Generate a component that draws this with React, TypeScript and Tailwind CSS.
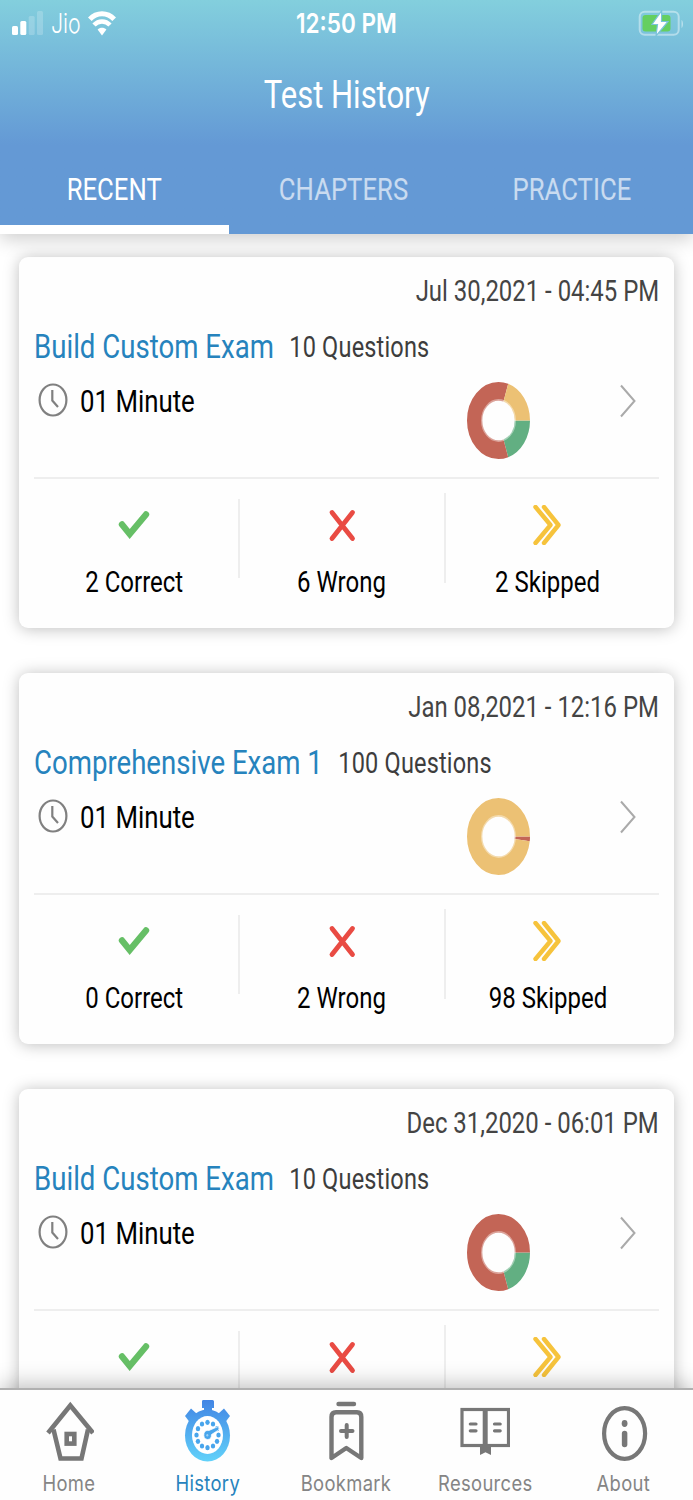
import React from 'react'
import { clsx } from 'clsx'

type Exam = {
  date: string
  title: string
  questions: number
  correct: number
  wrong: number
  skipped: number
}

const exams: Exam[] = [
  { date: 'Jul 30,2021 - 04:45 PM', title: 'Build Custom Exam', questions: 10, correct: 2, wrong: 6, skipped: 2 },
  { date: 'Jan 08,2021 - 12:16 PM', title: 'Comprehensive Exam 1', questions: 100, correct: 0, wrong: 2, skipped: 98 },
  { date: 'Dec 31,2020 - 06:01 PM', title: 'Build Custom Exam', questions: 10, correct: 2, wrong: 8, skipped: 0 },
]

const tabs = ['RECENT', 'CHAPTERS', 'PRACTICE']

const StatusBar: React.FC = () => (
  <div className="grid h-[46px] grid-cols-3 items-center pl-3 pr-[9px] font-['Inter',sans-serif] text-[27px] leading-none text-white">
    <div className="flex items-center">
      <svg className="h-6 w-[31px]" viewBox="0 0 31 24" fill="#fff">
        <rect x="0" y="15" width="6" height="9" rx="1.5" />
        <rect x="8.3" y="10" width="6" height="14" rx="1.5" />
        <rect x="16.7" y="5" width="6" height="19" rx="1.5" opacity=".2" />
        <rect x="25" y="0" width="6" height="24" rx="1.5" opacity=".2" />
      </svg>
      <span className="ml-2 w-[30px] origin-left scale-x-[.79] font-light">Jio</span>
      <svg className="ml-[7px] h-[25px] w-7" viewBox="0 0 28 25">
        <path d="M1.8 8.2C8.5 0.8 19.5 0.8 26.2 8.2" fill="none" stroke="#fff" strokeWidth="5" />
        <path d="M6 14.1C10.5 9.2 17.5 9.2 22 14.1" fill="none" stroke="#fff" strokeWidth="4.4" />
        <path d="M9.6 18.6C12 16 16 16 18.4 18.6L14 24.6Z" fill="#fff" />
      </svg>
    </div>
    <div className="flex justify-center whitespace-nowrap pr-[3px]">
      <span className="scale-x-[.835] font-semibold">12:50 PM</span>
    </div>
    <svg className="h-[27px] w-[46px] justify-self-end" viewBox="0 0 46 27">
      <rect x="1.7" y="1.8" width="39" height="23" rx="5" fill="none" stroke="#fff" strokeOpacity=".42" strokeWidth="2" />
      <path d="M43.5 10v8c2-1 2-7 0-8Z" fill="#fff" opacity=".45" />
      <rect x="4.5" y="5" width="28" height="16.500" rx="3" fill="#65cf60" />
      <path d="M23.700 .7L14 14.500h5.500L18 26L30 11.500h-6.500Z" fill="#fff" stroke="#7ac3d9" strokeWidth="1.200" />
    </svg>
  </div>
)

const Header: React.FC = () => (
  <header className="relative z-10 flex h-[234px] shrink-0 flex-col bg-linear-to-b from-[#83cfdd] to-[#6499d5] to-62% text-white shadow-[0_5px_18px_rgba(0,0,0,0.2)]">
    <StatusBar />
    <h1 className="flex h-[98px] items-center justify-center text-[38px] font-normal">
      <span className="scale-x-[.815]">Test History</span>
    </h1>
    <nav className="grid flex-1 grid-cols-[229px_228px_229px]">
      {tabs.map((tab, i) => (
        <button
          key={tab}
          className={clsx(
            'flex items-center justify-center border-b-[9px] pt-2 text-[32px]',
            i === 0 ? 'border-white text-white' : 'border-transparent text-white/65',
          )}
        >
          <span className="scale-x-[.803]">{tab}</span>
        </button>
      ))}
    </nav>
  </header>
)

const Donut: React.FC<{ exam: Exam }> = ({ exam }) => {
  const slices = [
    { value: exam.correct, color: '#62af82' },
    { value: exam.wrong, color: '#c36556' },
    { value: exam.skipped, color: '#ecc174' },
  ]
  let start = 0
  return (
    <svg className="h-[77px] w-[63px]" viewBox="0 0 76 76" preserveAspectRatio="none">
      {slices.map(({ value, color }) => {
        const share = (value / exam.questions) * 100
        const offset = -start
        start += share
        return share > 0 ? (
          <circle
            key={color}
            cx="38"
            cy="38"
            r="28.800"
            fill="none"
            stroke={color}
            strokeWidth="18.400"
            pathLength={100}
            strokeDasharray={`${share} ${100 - share}`}
            strokeDashoffset={offset}
          />
        ) : null
      })}
      <circle cx="38" cy="38" r="20.200" fill="none" stroke="#fff" strokeOpacity=".4" strokeWidth="1.800" />
    </svg>
  )
}

const CheckIcon = () => (
  <svg className="h-10 w-10" viewBox="0 0 40 40">
    <path d="M8 19.500L15.700 29L32 9.500" fill="none" stroke="#66bf66" strokeWidth="6.400" strokeLinecap="round" />
  </svg>
)

const CrossIcon = () => (
  <svg className="h-10 w-10" viewBox="0 0 40 40">
    <path d="M10 7.500L30.500 33.500M30.500 7.500L10 33.500" fill="none" stroke="#e94b43" strokeWidth="4.800" strokeLinecap="round" />
  </svg>
)

const SkipIcon = () => (
  <svg className="h-10 w-10" viewBox="0 0 40 40">
    <path d="M7.500 2L22.500 20L7.500 38M16 2L30.500 20L16 38" fill="none" stroke="#f6c33c" strokeWidth="4.400" strokeLinecap="round" strokeLinejoin="round" />
  </svg>
)

const Stat: React.FC<{ icon: React.ReactNode; label: string }> = ({ icon, label }) => (
  <div className="flex flex-col items-center pt-[26px]">
    {icon}
    <span className="mt-[17px] scale-x-[.8] whitespace-nowrap text-[30px] leading-10 text-black">{label}</span>
  </div>
)

const ExamCard: React.FC<{ exam: Exam }> = ({ exam }) => (
  <article className="h-[371px] shrink-0 rounded-[9px] bg-[#fefefe] px-[15px] pt-[17px] shadow-[0_1px_16px_rgba(0,0,0,0.26)]">
    <div className="flex h-9 items-center justify-end">
      <time className="origin-right scale-x-[.825] text-[29px] text-[#444]">{exam.date}</time>
    </div>
    <div className="mt-2 flex h-[58px] origin-left scale-x-[.812] items-center whitespace-nowrap">
      <h2 className="text-[34px] font-normal text-[#2683bd]">{exam.title}</h2>
      <span className="ml-[19px] mt-0.5 text-[29px] tracking-[0.2px] text-[#3d3d3d]">{exam.questions} Questions</span>
    </div>
    <div className="flex h-[103px] items-start border-b-2 border-[#eee]">
      <svg className="ml-1 mt-[7px] h-[34px] w-[30px] shrink-0" viewBox="0 0 30 34" fill="none" stroke="#808080" strokeWidth="2.200">
        <ellipse cx="15" cy="17" rx="13.400" ry="15.500" />
        <path d="M14.300 7v10.500l5.700 6.500" />
      </svg>
      <span className="ml-3 h-[50px] w-[380px] shrink-0 origin-left scale-x-[.806] text-[32px] leading-[50px] text-black">01 Minute</span>
      <div className="ml-[7px] mt-[6px] shrink-0">
        <Donut exam={exam} />
      </div>
      <svg className="ml-[89px] mt-2 h-[34px] w-[18px] shrink-0" viewBox="0 0 18 34" fill="none" stroke="#aaa" strokeWidth="2">
        <path d="M2 1.500L15.500 17L2 32.500" />
      </svg>
    </div>
    <div className="-ml-[3px] grid w-[620px] grid-cols-3">
      <Stat icon={<CheckIcon />} label={`${exam.correct} Correct`} />
      <div className="-mr-0.5 grid grid-cols-[2px_1fr_2px]">
        <div className="mt-5 h-[79px] bg-[#eee]" />
        <Stat icon={<CrossIcon />} label={`${exam.wrong} Wrong`} />
        <div className="mt-[14px] h-[90px] bg-[#eee]" />
      </div>
      <Stat icon={<SkipIcon />} label={`${exam.skipped} Skipped`} />
    </div>
  </article>
)

const HomeIcon = () => (
  <svg className="h-[62px] w-[50px]" viewBox="0 0 50 62" fill="none" stroke="#777" strokeWidth="4.600">
    <path d="M4 33L26.300 5.500L49 33" />
    <path d="M9.500 29.500L16.500 58.500H37.500L44 29.500" />
    <rect x="22.700" y="34" width="7.600" height="9.600" />
  </svg>
)

const HistoryIcon = () => (
  <svg className="h-[62px] w-[50px]" viewBox="0 0 50 62">
    <defs>
      <linearGradient id="watch" x1="0" y1="0" x2="0" y2="62" gradientUnits="userSpaceOnUse">
        <stop offset="0" stopColor="#4285e4" />
        <stop offset="1" stopColor="#61d2fa" />
      </linearGradient>
    </defs>
    <g fill="url(#watch)">
      <path d="M20 0h9.500a1.500 1.500 0 0 1 1.500 1.500V8h-2v3h-8V8h-2V1.500A1.500 1.500 0 0 1 20 0Z" />
      <path d="M8 8.500L14 14L6.500 22L2 16Z" />
      <path d="M41 8.500L35 14L42.500 22L47 16Z" />
      <ellipse cx="24.500" cy="35.500" rx="22.500" ry="26" />
    </g>
    <ellipse cx="24.500" cy="35" rx="15.500" ry="19" fill="#fff" />
    <g fill="#48a5ec">
      {Array.from({ length: 12 }, (_, i) => (i * Math.PI) / 6).map((a) => (
        <ellipse key={a} cx={24.5 + 11 * Math.sin(a)} cy={35 - 12.7 * Math.cos(a)} rx="2.200" ry="2.600" />
      ))}
      <path d="M21 33Q22.500 29.500 26 30.500L34.500 26.800Q37 27.800 35.500 30L28.500 34.500Q28.500 39.500 24.500 39.500Q20 39 21 33Z" stroke="#fff" strokeWidth=".7" />
    </g>
    <ellipse cx="24.300" cy="35.300" rx="1" ry="1.200" fill="#9ed2f5" />
  </svg>
)

const BookmarkIcon = () => (
  <svg className="h-[62px] w-[50px]" viewBox="0 0 50 62" fill="none" stroke="#777" strokeWidth="4.400" strokeLinecap="round">
    <path d="M17.500 4H33" />
    <path d="M10.500 58V17Q10.500 12.300 15 12.300H36Q40.300 12.300 40.300 17V58L25.300 48Z" strokeLinejoin="round" />
    <path d="M20 31H31.500M25.700 25V37" strokeWidth="4" />
  </svg>
)

const ResourcesIcon = () => (
  <svg className="h-[62px] w-[50px]" viewBox="0 0 50 62" fill="none" stroke="#777" strokeWidth="3.200">
    <rect x="2" y="9.500" width="46.500" height="36" />
    <path d="M25.200 9V46" strokeWidth="5" />
    <path d="M20 46H31V55L25.500 52.300L20 55Z" fill="#777" stroke="none" />
    <path d="M10.300 24H16M10.300 30.800H16M34.500 24H40.200M34.500 30.800H40.200" strokeLinecap="round" />
  </svg>
)

const AboutIcon = () => (
  <svg className="h-[62px] w-[50px]" viewBox="0 0 50 62" fill="none" stroke="#777">
    <ellipse cx="25.600" cy="33.500" rx="20.500" ry="25.300" strokeWidth="4.200" />
    <ellipse cx="25.600" cy="23.500" rx="2.900" ry="3.400" fill="#777" stroke="none" />
    <path d="M25.600 33.500V44.500" strokeWidth="5.500" strokeLinecap="round" />
  </svg>
)

const navItems = [
  { label: 'Home', icon: <HomeIcon /> },
  { label: 'History', icon: <HistoryIcon />, active: true },
  { label: 'Bookmark', icon: <BookmarkIcon /> },
  { label: 'Resources', icon: <ResourcesIcon /> },
  { label: 'About', icon: <AboutIcon /> },
]

const BottomNav: React.FC = () => (
  <nav className="relative z-10 grid h-[112px] shrink-0 grid-cols-5 border-t-2 border-[#b0b0b0] bg-[#fefefe] pt-[10px] shadow-[0_-2px_22px_rgba(0,0,0,0.28)]">
    {navItems.map(({ label, icon, active }) => (
      <a key={label} className="flex flex-col items-center">
        {icon}
        <span
          className={clsx(
            "mt-[7px] scale-x-[.855] font-['Inter',sans-serif] text-[21.500px] leading-7 tracking-[0.4px]",
            active ? 'text-[#2683bd]' : 'text-[#858585]',
          )}
        >
          {label}
        </span>
      </a>
    ))}
  </nav>
)

export default function App() {
  return (
    <div className="flex h-[1500px] w-[693px] flex-col overflow-hidden bg-white font-['Roboto',sans-serif]">
      <Header />
      <main className="flex flex-1 flex-col gap-[45px] overflow-hidden pl-[19px] pr-[19px] pt-[22.500px]">
        {exams.map((exam) => (
          <ExamCard key={exam.date} exam={exam} />
        ))}
      </main>
      <BottomNav />
    </div>
  )
}
